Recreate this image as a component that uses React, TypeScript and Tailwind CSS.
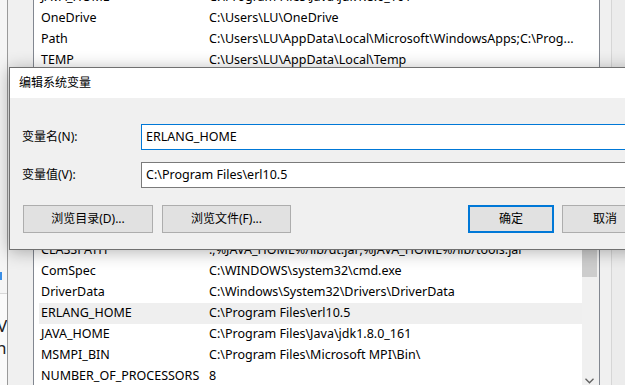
const userVars = [
  ["JAVA_HOME", "C:\\Program Files\\Java\\jdk1.8.0_161"],
  ["OneDrive", "C:\\Users\\LU\\OneDrive"],
  ["Path", "C:\\Users\\LU\\AppData\\Local\\Microsoft\\WindowsApps;C:\\Prog..."],
  ["TEMP", "C:\\Users\\LU\\AppData\\Local\\Temp"],
  ["TMP", "C:\\Users\\LU\\AppData\\Local\\Temp"],
];

const systemVars = [
  ["CLASSPATH", ".;%JAVA_HOME%/lib/dt.jar;%JAVA_HOME%/lib/tools.jar"],
  ["ComSpec", "C:\\WINDOWS\\system32\\cmd.exe"],
  ["DriverData", "C:\\Windows\\System32\\Drivers\\DriverData"],
  ["ERLANG_HOME", "C:\\Program Files\\erl10.5"],
  ["JAVA_HOME", "C:\\Program Files\\Java\\jdk1.8.0_161"],
  ["MSMPI_BIN", "C:\\Program Files\\Microsoft MPI\\Bin\\"],
  ["NUMBER_OF_PROCESSORS", "8"],
  ["OS", "Windows_NT"],
];

const Row = ({ name, value, selected }: { name: string; value: string; selected?: boolean }) => {
  return (
    <div className={`ml-[5px] flex h-[21px] items-center whitespace-nowrap text-[12.5px] ${selected ? "bg-[#efefef]" : ""}`}>
      <span className="w-[170px] shrink-0 pl-[2px]">{name}</span>
      <span>{value}</span>
    </div>
  );
};

const Button = ({ children, primary, width }: { children: React.ReactNode; primary?: boolean; width: string }) => {
  return (
    <div
      className={`flex h-[28px] items-center justify-center bg-[#e1e1e1] ${width} ${
        primary ? "border-2 border-[#0078d7]" : "border border-[#adadad]"
      }`}
    >
      {children}
    </div>
  );
};

export default function App() {
  return (
    <div className="relative flex h-[385px] w-[625px] overflow-hidden bg-[#f0f0f0] font-['Noto_Sans','Noto_Sans_CJK_SC',sans-serif] text-[12px] text-black">
      {/* window behind, left edge */}
      <div className="flex w-[7px] shrink-0 flex-col overflow-hidden bg-[#f5f5f5]">
        <div className="h-[272px]" />
        <div className="h-[8px] w-[2px] bg-[#3a8ee6]" />
        <div className="h-[13px]" />
        <div className="h-px bg-[#d8d8d8]" />
        <div className="flex-1 bg-[#fafafa] pt-[22px] text-[17px] leading-[20px] text-[#222]">
          <div className="-ml-[3px]">Va</div>
          <div className="-ml-[4px] mt-[2px]">n</div>
        </div>
      </div>

      {/* environment variables window */}
      <div className="w-[605px] shrink-0 border-x border-l-[#9a9a9a] border-r-[#d6d6d6] bg-[#f0f0f0] pl-[25px] pr-[11px]">
        <div className="-mt-[14px] h-[150px] overflow-hidden border border-[#828790] bg-white">
          {userVars.map(([n, v]) => (
            <Row key={n} name={n} value={v} />
          ))}
        </div>

        <div className="h-[103px]" />

        <div className="flex h-[151px] border border-[#828790] bg-white">
          <div className="flex-1 overflow-hidden">
            {systemVars.map(([n, v]) => (
              <Row key={n} name={n} value={v} selected={n === "ERLANG_HOME"} />
            ))}
          </div>
          <div className="flex w-[17px] flex-col bg-[#f0f0f0]">
            <div className="mt-[2px] h-[35px] w-[15px] bg-[#cdcdcd]" />
            <div className="flex-1" />
            <div className="flex h-[17px] items-center justify-center pr-[2px]">
              <svg width="9" height="6" viewBox="0 0 9 6">
                <polyline points="0.5,0.8 4.5,4.8 8.5,0.8" fill="none" stroke="#606060" strokeWidth="1.3" />
              </svg>
            </div>
          </div>
        </div>
      </div>

      {/* right edge */}
      <div className="flex-1 bg-[#ececec]" />

      {/* edit dialog */}
      <div className="absolute left-[9px] top-[67px] w-[660px] border border-[#707070] bg-[#f0f0f0] shadow-[0_2px_16px_rgba(0,0,0,0.3)]">
        <div className="flex h-[30px] items-center bg-white pl-[9px]">编辑系统变量</div>
        <div className="pb-[16px] pt-[26px]">
          <div className="flex h-[26px] items-center">
            <span className="w-[131px] shrink-0 pl-[12px]">变量名(N):</span>
            <div className="flex h-[26px] w-[500px] items-center border border-[#0078d7] bg-white pl-[4px] text-[12.5px]">
              ERLANG_HOME
            </div>
          </div>
          <div className="mt-[12px] flex h-[26px] items-center">
            <span className="w-[131px] shrink-0 pl-[12px]">变量值(V):</span>
            <div className="flex h-[26px] w-[500px] items-center border border-[#7a7a7a] bg-white pl-[4px] text-[12.5px]">
              C:\Program Files\erl10.5
            </div>
          </div>
          <div className="mt-[17px] flex pl-[13px]">
            <Button width="w-[130px]">浏览目录(D)...</Button>
            <div className="ml-[9px]">
              <Button width="w-[129px]">浏览文件(F)...</Button>
            </div>
            <div className="ml-[177px]">
              <Button width="w-[86px]" primary>
                确定
              </Button>
            </div>
            <div className="ml-[8px]">
              <Button width="w-[86px]">取消</Button>
            </div>
          </div>
        </div>
      </div>
    </div>
  );
}
